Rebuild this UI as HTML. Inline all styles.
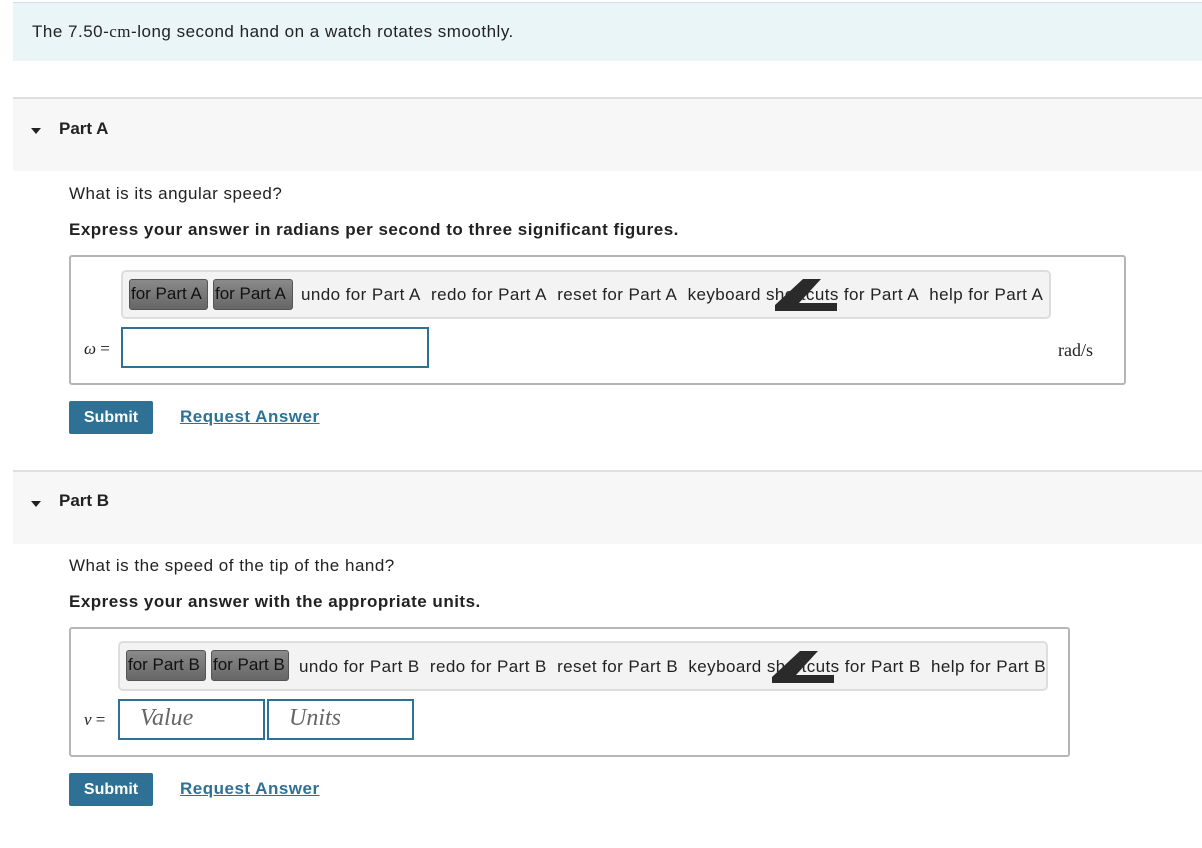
<!DOCTYPE html>
<html><head><style>
body{margin:0;width:1202px;height:848px;background:#fff;font-family:"Liberation Sans",sans-serif;color:#222;position:relative;overflow:hidden}
.a{position:absolute}
.t{font-size:17px;letter-spacing:0.5px}
.banner{left:13px;top:2px;width:1189px;height:58px;background:#e9f5f7;border-top:1px solid #d5dde0}
.hdr{left:13px;width:1189px;height:72px;background:#f7f7f7;border-top:2px solid #e0e0e0}
.tri{width:0;height:0;border-left:5px solid transparent;border-right:5px solid transparent;border-top:6px solid #222}
.box{border:2px solid #b5b5b5;border-radius:3px;box-sizing:border-box}
.tb{background:#f3f3f3;border:2px solid #ddd;border-radius:5px;box-sizing:border-box;font-size:17px;letter-spacing:0.42px;white-space:nowrap}
.btn{position:absolute;top:7px;height:31px;background:linear-gradient(#8a8a8a,#666);border:1px solid #555;border-radius:3px;box-sizing:border-box;color:#111;line-height:27px;padding-left:1px;overflow:hidden;letter-spacing:0}
.inp{border:2px solid #2e7195;box-sizing:border-box;background:#fff}
.sub{background:#2e7195;color:#fff;font-size:16px;font-weight:bold;text-align:center;line-height:33px;width:84px;height:33px;border-radius:2px}
.req{color:#2e7195;font-weight:bold;font-size:17px;letter-spacing:0.5px;text-decoration:underline}
.serif{font-family:"Liberation Serif",serif}
</style></head><body>
<div class="a banner"><div class="a t" style="left:19px;top:19px">The 7.50-<span class="serif">cm</span>-long second hand on a watch rotates smoothly.</div></div>

<div class="a hdr" style="top:97px"><div class="a tri" style="left:18px;top:29px"></div><div class="a" style="left:46px;top:20px;font-weight:bold;font-size:17px">Part A</div></div>
<div class="a t" style="left:69px;top:184px">What is its angular speed?</div>
<div class="a t" style="left:69px;top:220px;font-weight:bold">Express your answer in radians per second to three significant figures.</div>
<div class="a box" style="left:69px;top:255px;width:1057px;height:130px"></div>
<div class="a tb" style="left:121px;top:270px;width:930px;height:49px">
<div class="btn" style="left:6px;width:79px">for Part A</div>
<div class="btn" style="left:90px;width:80px">for Part A</div>
<div class="a" style="left:178px;top:13px">undo for Part A&nbsp; redo for Part A&nbsp; reset for Part A&nbsp; keyboard shortcuts for Part A&nbsp; help for Part A</div>
<svg class="a" style="left:650px;top:5px" width="66" height="36"><path d="M48 2 L30 2 L2 28 L2 34 L64 34 L64 26 L26 26 Z" fill="#2a2a2a"/></svg>
</div>
<div class="a serif" style="left:84px;top:339px;font-size:17px;font-style:italic">ω <span style="font-style:normal">=</span></div>
<div class="a inp" style="left:121px;top:327px;width:308px;height:41px"></div>
<div class="a serif" style="left:1058px;top:340px;font-size:18px">rad/s</div>
<div class="a sub" style="left:69px;top:401px">Submit</div>
<div class="a req" style="left:180px;top:407px">Request Answer</div>

<div class="a hdr" style="top:470px"><div class="a tri" style="left:18px;top:29px"></div><div class="a" style="left:46px;top:19px;font-weight:bold;font-size:17px">Part B</div></div>
<div class="a t" style="left:69px;top:556px">What is the speed of the tip of the hand?</div>
<div class="a t" style="left:69px;top:592px;font-weight:bold">Express your answer with the appropriate units.</div>
<div class="a box" style="left:69px;top:627px;width:1001px;height:130px"></div>
<div class="a tb" style="left:118px;top:641px;width:930px;height:50px">
<div class="btn" style="left:6px;width:80px">for Part B</div>
<div class="btn" style="left:91px;width:78px">for Part B</div>
<div class="a" style="left:179px;top:14px">undo for Part B&nbsp; redo for Part B&nbsp; reset for Part B&nbsp; keyboard shortcuts for Part B&nbsp; help for Part B</div>
<svg class="a" style="left:650px;top:6px" width="66" height="36"><path d="M48 2 L30 2 L2 28 L2 34 L64 34 L64 26 L26 26 Z" fill="#2a2a2a"/></svg>
</div>
<div class="a serif" style="left:84px;top:710px;font-size:17px;font-style:italic">v <span style="font-style:normal">=</span></div>
<div class="a inp serif" style="left:118px;top:699px;width:147px;height:41px;font-size:24px;font-style:italic;color:#666;padding:4px 0 0 20px">Value</div>
<div class="a inp serif" style="left:267px;top:699px;width:147px;height:41px;font-size:24px;font-style:italic;color:#666;padding:4px 0 0 20px">Units</div>
<div class="a sub" style="left:69px;top:773px">Submit</div>
<div class="a req" style="left:180px;top:779px">Request Answer</div>
</body></html>
